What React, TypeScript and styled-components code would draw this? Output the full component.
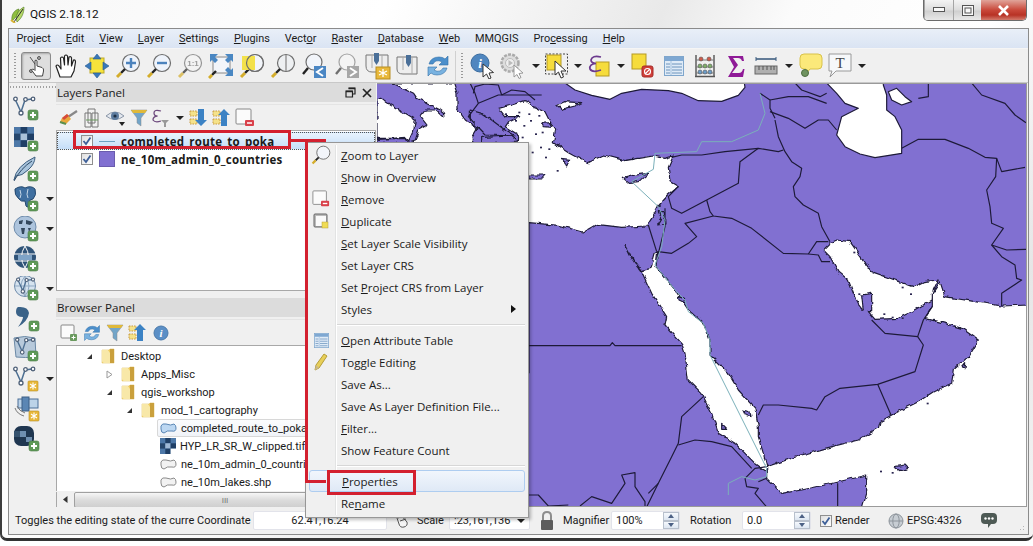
import React from 'react';
import styled, { createGlobalStyle } from 'styled-components';

const UI_FONT = '"Open Sans", "Noto Sans", "Liberation Sans", sans-serif';
const NARROW_FONT = 'Roboto, "Liberation Sans", sans-serif';

const GlobalStyle = createGlobalStyle`
    html, body {
        margin: 0;
        padding: 0;
        background: #fff;
    }
    body {
        font-family: ${UI_FONT};
        font-size: 11.5px;
        color: #1a1a1a;
        width: 1033px;
        height: 546px;
        overflow: hidden;
    }
`;

const Window = styled.div`
    position: relative;
    width: 1033px;
    height: 541px;
    box-sizing: border-box;
    border-left: 2px solid #3c3c3c;
    border-bottom: 3px solid #333;
    border-radius: 0 0 7px 7px;
    background: linear-gradient(115deg, #f7f7f7 0%, #fff 30%, #e9e9e9 52%, #fbfbfb 62%, #fff 78%, #e6e6e6 90%, #f4f4f4 100%);
    display: flex;
    flex-direction: column;
`;

const TitleBar = styled.div`
    height: 28px;
    flex: none;
    display: flex;
    align-items: center;
    padding-left: 8px;
    gap: 4px;
    font-family: ${NARROW_FONT};
    font-size: 11.8px;
    color: #111;
`;

const WinControls = styled.div`
    position: absolute;
    top: 0;
    right: 6px;
    display: flex;
    height: 20px;
    border: 1px solid #6b6b6b;
    border-top: none;
    border-radius: 0 0 5px 5px;
    overflow: hidden;
`;

const WinButton = styled.div<{ $w: number; $close?: boolean }>`
    width: ${p => p.$w}px;
    display: flex;
    align-items: center;
    justify-content: center;
    color: #fff;
    border-left: ${p => p.$close ? 'none' : '1px solid #a5a5a5'};
    background: ${p => p.$close
        ? 'linear-gradient(#e0a49a, #c9483a 50%, #b83225 75%, #d27a6c)'
        : 'linear-gradient(#f4f4f4, #dcdcdc 50%, #cfcfcf 55%, #e8e8e8)'};
`;

const Inner = styled.div`
    flex: 1;
    margin: 0 4px 3px 6px;
    border: 1px solid #8b8b8b;
    background: #f0f0f0;
    display: flex;
    flex-direction: column;
    min-height: 0;
`;

const MenuBar = styled.div`
    height: 19px;
    flex: none;
    display: flex;
    align-items: center;
    font-family: ${NARROW_FONT};
    font-size: 10.9px;
    background: linear-gradient(#e9eff8, #dae4f3);
    border-bottom: 1px solid #f5f5f5;
`;

const MenuItem = styled.div`
    padding: 0 7.5px;
    white-space: nowrap;
`;

const U = styled.span`
    text-decoration: underline;
    text-underline-offset: 1px;
`;

const MainToolbar = styled.div`
    height: 33px;
    flex: none;
    display: flex;
    align-items: center;
    border-bottom: 1px solid #c8c8c8;
    padding-left: 3px;
`;

const Grip = styled.div`
    width: 2px;
    height: 26px;
    margin: 0 5px 0 2px;
    background-image: linear-gradient(#9a9a9a 50%, transparent 50%);
    background-size: 2px 3px;
    flex: none;
`;

const ToolSlot = styled.div<{ $w: number; $active?: boolean }>`
    width: ${p => p.$w}px;
    height: 28px;
    flex: none;
    display: flex;
    align-items: center;
    justify-content: center;
    box-sizing: border-box;
    border-radius: 3px;
    ${p => p.$active && `
        border: 1px solid #8a8a8a;
        background: #dedede;
        box-shadow: inset 1px 1px 2px #aaa;
    `}
`;

const ToolSep = styled.div`
    width: 1px;
    height: 30px;
    background: #d0d0d0;
    margin: 0 3px 0 2px;
    flex: none;
`;

const Caret = styled.div`
    width: 0;
    height: 0;
    border-left: 4px solid transparent;
    border-right: 4px solid transparent;
    border-top: 4px solid #222;
`;

const BodyRow = styled.div`
    height: 424px;
    flex: none;
    display: flex;
`;

const SideToolbar = styled.div`
    width: 47px;
    flex: none;
    display: flex;
    flex-direction: column;
    box-sizing: border-box;
    padding: 11px 0 0 4px;
    background-image: linear-gradient(90deg, #a0a0a0 50%, transparent 50%);
    background-size: 3px 2px;
    background-repeat: repeat-x;
    background-position: 4px 3px;
`;

const SideRow = styled.div`
    height: 30px;
    flex: none;
    display: flex;
    align-items: center;
    gap: 5px;
`;

const SideIconBox = styled.div`
    width: 28px;
    height: 26px;
    flex: none;
`;

const Panels = styled.div`
    width: 320px;
    flex: none;
    display: flex;
    flex-direction: column;
    overflow: hidden;
`;

const PanelTitle = styled.div`
    height: 19px;
    flex: none;
    background: #dcdcdc;
    display: flex;
    align-items: center;
    justify-content: space-between;
    padding: 0 4px 0 1px;
    font-size: 11.6px;
`;

const PanelTitleIcons = styled.div`
    display: flex;
    gap: 6px;
    align-items: center;
`;

const PanelToolbar = styled.div`
    height: 25px;
    flex: none;
    margin-top: 2px;
    display: flex;
    align-items: center;
    gap: 3px;
    padding-left: 3px;
    border-top: 1px solid #e4e4e4;
`;

const PanelIcon = styled.div<{ $w?: number }>`
    width: ${p => p.$w || 20}px;
    height: 20px;
    flex: none;
    display: flex;
    align-items: center;
    justify-content: center;
`;

const LayerList = styled.div`
    height: 161px;
    flex: none;
    box-sizing: border-box;
    background: #fff;
    border: 1px solid #a8a8a8;
    padding-top: 1px;
    font-weight: 700;
    font-size: 11.5px;
    letter-spacing: 0.26px;
`;

const LayerRow = styled.div<{ $selected?: boolean }>`
    height: 18px;
    display: flex;
    align-items: center;
    box-sizing: border-box;
    padding-left: 24px;
    gap: 6px;
    ${p => p.$selected && `
        background: linear-gradient(#e8f3fd, #c5def8);
        border: 1px dotted #555;
        padding-left: 23px;
    `}
`;

const CheckBox = styled.div`
    width: 12px;
    height: 12px;
    flex: none;
    box-sizing: border-box;
    border: 1px solid #8f8f8f;
    background: linear-gradient(135deg, #dfdfdf, #fff);
    display: flex;
    align-items: center;
    justify-content: center;
`;

const Swatch = styled.div`
    width: 16px;
    height: 16px;
    flex: none;
    box-sizing: border-box;
    background: #8170d1;
    border: 1px solid #6a5cae;
`;

const LineSymbol = styled.div`
    width: 16px;
    height: 1px;
    flex: none;
    background: #6aa2c4;
`;

const Splitter = styled.div`
    height: 7px;
    flex: none;
`;

const Tree = styled.div`
    height: 146px;
    flex: none;
    box-sizing: border-box;
    background: #fff;
    border-left: 1px solid #a8a8a8;
    border-top: 1px solid #a8a8a8;
    padding-top: 1px;
    overflow: hidden;
    font-family: ${NARROW_FONT};
    font-size: 11px;
`;

const TreeRow = styled.div<{ $indent: number }>`
    height: 18px;
    display: flex;
    align-items: center;
    padding-left: ${p => p.$indent}px;
    white-space: nowrap;
    box-sizing: border-box;
`;

const Expander = styled.div`
    width: 24px;
    flex: none;
    display: flex;
    justify-content: center;
`;

const TreeLabel = styled.span`
    margin-left: 6px;
    flex: 1;
`;

const LeafLabel = styled.span`
    margin-left: 4px;
    flex: 1;
`;

const LeafBox = styled.div<{ $on?: boolean }>`
    display: flex;
    align-items: center;
    flex: 1;
    height: 18px;
    padding-left: 3px;
    box-sizing: border-box;
    ${p => p.$on && `
        background: linear-gradient(#fbfcfe, #f0f3f8);
        border: 1px solid #d8d8d8;
        border-radius: 2px;
        padding-left: 2px;
    `}
`;

const HScroll = styled.div`
    height: 15px;
    flex: none;
    margin-top: 1px;
    display: flex;
    align-items: center;
    background: #f0f0f0;
    border-left: 1px solid #a8a8a8;
`;

const ScrollArrow = styled.div`
    width: 17px;
    flex: none;
    display: flex;
    justify-content: center;
`;

const ScrollThumb = styled.div`
    flex: 1;
    height: 14px;
    border: 1px solid #a0a0a0;
    border-radius: 2px;
    background: linear-gradient(#f6f6f6, #dcdcdc 50%, #cfcfcf);
    color: #666;
    font-size: 8px;
    text-align: center;
    line-height: 14px;
`;

const MapCanvas = styled.div`
    margin-left: 1px;
    width: 650px;
    height: 424px;
    flex: none;
    background: #fff;
    box-sizing: border-box;
    border-top: 1px solid #9a9a9a;
    border-bottom: 1px solid #9a9a9a;
    border-right: 1px solid #9a9a9a;
    overflow: hidden;
`;

const StatusBar = styled.div`
    flex: 1;
    display: flex;
    align-items: center;
    padding-left: 6px;
    white-space: nowrap;
    position: relative;
    font-family: ${NARROW_FONT};
    font-size: 11px;
`;

const StatusText = styled.div<{ $w: number }>`
    width: ${p => p.$w}px;
    flex: none;
`;

const StatusInput = styled.div<{ $w: number; $center?: boolean }>`
    width: ${p => p.$w}px;
    height: 19px;
    flex: none;
    box-sizing: border-box;
    background: #fff;
    border: 1px solid #e2e3ea;
    border-radius: 2px;
    display: flex;
    align-items: center;
    justify-content: ${p => p.$center ? 'center' : 'flex-start'};
    padding: 0 4px;
    position: relative;
`;

const ComboArrow = styled.div`
    position: absolute;
    right: 0;
    top: 0;
    bottom: 0;
    width: 16px;
    display: flex;
    align-items: center;
    justify-content: center;
`;

const Spin = styled.div`
    position: absolute;
    right: 0;
    top: 0;
    bottom: 0;
    width: 16px;
    display: flex;
    flex-direction: column;
`;

const SpinPart = styled.div<{ $up?: boolean }>`
    flex: 1;
    border: 1px solid #b8c0cc;
    background: linear-gradient(#f6f9fd, #dde6f1);
    display: flex;
    align-items: center;
    justify-content: center;
    &::after {
        content: '';
        border-left: 3px solid transparent;
        border-right: 3px solid transparent;
        ${p => p.$up ? 'border-bottom: 4px solid #4d6185;' : 'border-top: 4px solid #4d6185;'}
    }
`;

const Gap = styled.div<{ $w: number }>`
    width: ${p => p.$w}px;
    flex: none;
    display: flex;
    justify-content: center;
`;

const SizeGrip = styled.div`
    position: absolute;
    right: 2px;
    bottom: 2px;
    width: 10px;
    height: 10px;
    background-image: radial-gradient(#b5b5b5 40%, transparent 45%);
    background-size: 3px 3px;
    clip-path: polygon(100% 0, 100% 100%, 0 100%);
`;

const ContextMenu = styled.div`
    position: absolute;
    left: 303px;
    top: 142px;
    width: 224px;
    height: 376px;
    box-sizing: border-box;
    background: #f0f0f0;
    border: 1px solid #979797;
    box-shadow: 2px 2px 3px rgba(0, 0, 0, 0.25);
    padding-top: 1px;
    &::before {
        content: '';
        position: absolute;
        left: 29px;
        top: 2px;
        bottom: 2px;
        width: 1px;
        background: #e2e3e3;
        box-shadow: 1px 0 0 #fff;
    }
`;

const MenuRow = styled.div<{ $highlight?: boolean }>`
    height: 22px;
    position: relative;
    display: flex;
    align-items: center;
    padding-left: 35px;
    box-sizing: border-box;
    ${p => p.$highlight && `
        margin: 0 3px;
        padding-left: 32px;
        border: 1px solid #aecdf0;
        border-radius: 3px;
        background: linear-gradient(#f1f6fc, #dfe9f6);
    `}
`;

const MenuIcon = styled.div`
    position: absolute;
    left: 5px;
    top: 2px;
    width: 20px;
    height: 18px;
    display: flex;
    align-items: center;
    justify-content: center;
`;

const SubArrow = styled.div`
    position: absolute;
    right: 12px;
    top: 7px;
    border-top: 4px solid transparent;
    border-bottom: 4px solid transparent;
    border-left: 5px solid #111;
`;

const MenuSep = styled.div`
    height: 1px;
    margin: 4px 3px 4px 30px;
    background: #d7d7d7;
    box-shadow: 0 1px 0 #fff;
`;

const RedFrame = styled.div<{ $l: number; $t: number; $w: number; $h: number }>`
    position: absolute;
    left: ${p => p.$l}px;
    top: ${p => p.$t}px;
    width: ${p => p.$w}px;
    height: ${p => p.$h}px;
    box-sizing: border-box;
    border: 3px solid #d3202f;
`;

const RedConnector = styled.div`
    position: absolute;
    left: 287px;
    top: 139px;
    width: 37px;
    height: 344px;
    box-sizing: border-box;
    border-top: 3px solid #d3202f;
    &::before {
        content: '';
        position: absolute;
        left: 16px;
        top: -3px;
        bottom: 0;
        width: 21px;
        box-sizing: border-box;
        border-left: 3px solid #d3202f;
        border-bottom: 3px solid #d3202f;
    }
`;

/* ---------- drawings ---------- */

const Check = () => (
    <svg width="10" height="10" viewBox="0 0 10 10">
        <path d="M1.5 5 L4 8 L8.5 1.5" fill="none" stroke="#3d5f98" strokeWidth="1.8" />
    </svg>
);

const Logo = () => (
    <svg width="16" height="17" viewBox="0 0 16 17">
        <path d="M2 15 C1 9 4 4 9 3 C8 8 6 12 2 15Z" fill="#8fbf3f" stroke="#4f7a20" strokeWidth=".6" />
        <path d="M7 16 C5 10 8 4 14 1 C14 7 12 12 7 16Z" fill="#b7d96a" stroke="#4f7a20" strokeWidth=".6" />
        <path d="M4 16 L13 3" stroke="#2c2c2c" strokeWidth="1" />
        <path d="M1 14 L5 17" stroke="#d8b437" strokeWidth="2" />
    </svg>
);

const Lens: React.FC<{ children?: React.ReactNode; size?: number; dim?: boolean; fill?: string }> = ({ children, size = 26, dim, fill = '#f2f5fa' }) => (
    <svg width={size} height={size} viewBox="0 0 26 26" opacity={dim ? 0.7 : 1}>
        <circle cx="16" cy="10" r="8.5" fill={fill} stroke="#6e6e6e" strokeWidth="1.2" />
        <path d="M10 16 L6 20" stroke="#222" strokeWidth="2.4" />
        <path d="M6 20 L2 24" stroke="#d4ad2b" strokeWidth="3" />
        {children}
    </svg>
);

const PlusBadge: React.FC<{ x?: number; y?: number }> = ({ x = 15, y = 15 }) => (
    <g transform={`translate(${x} ${y})`}>
        <rect width="10" height="10" rx="2" fill="#5f9a58" stroke="#4c7d46" strokeWidth=".6" />
        <path d="M5 2 V8 M2 5 H8" stroke="#fff" strokeWidth="2" />
    </g>
);

const StarBadge: React.FC<{ x?: number; y?: number }> = ({ x = 15, y = 15 }) => (
    <g transform={`translate(${x} ${y})`}>
        <rect width="10" height="10" rx="1" fill="#e8b83a" stroke="#b78d22" strokeWidth=".6" />
        <path d="M5 1.5 V8.5 M2 3 L8 7 M8 3 L2 7" stroke="#fff" strokeWidth="1.1" />
    </g>
);

const Vee: React.FC<{ dx?: number; dy?: number; s?: number }> = ({ dx = 0, dy = 0, s = 1 }) => (
    <g transform={`translate(${dx} ${dy}) scale(${s})`} fill="none" stroke="#4d5f77" strokeWidth="1.3">
        <path d="M2 3 L8 16 L12 4 L19 3" stroke="#4d6f92" strokeWidth="1.5" />
        <circle cx="2.5" cy="3" r="1.8" fill="#fff" />
        <circle cx="8" cy="17" r="2" fill="#fff" />
        <circle cx="12.5" cy="3.5" r="1.8" fill="#fff" />
        <circle cx="20" cy="3" r="1.8" fill="#fff" />
    </g>
);

const S: React.FC<{ w?: number; h?: number; children: React.ReactNode }> = ({ w = 26, h = 26, children }) => (
    <svg width={w} height={h} viewBox={`0 0 ${w} ${h}`}>{children}</svg>
);

const TouchIcon = () => (
    <S w={24} h={24}>
        <path d="M6 3 L18 20" stroke="#555" strokeWidth="1" />
        <circle cx="7" cy="17" r="1.5" fill="#aaa" stroke="#555" />
        <circle cx="15" cy="4" r="1.5" fill="#aaa" stroke="#555" />
        <path d="M11 11 V6.5 Q12.5 5.5 13 7 V12 L18 13.5 Q20 14.5 19.5 17 L18.5 22 H12 L7.5 16 Q8 14.5 10 15.5 L11 16.5Z" fill="#fff" stroke="#444" strokeWidth="1" />
    </S>
);

const HandIcon = () => (
    <S w={24} h={26}>
        <path d="M6 24 L2 13 Q3 11 5 13 L7 16 L6.5 5 Q8 3 9.5 5 L10.5 12 L10.5 3 Q12 1 13.5 3 L14 12 L15 4 Q17 3 17.5 5 L17.5 13 L19.5 7 Q21.5 6.5 21.5 9 L20 18 L17 24 Z" fill="#fff" stroke="#222" strokeWidth="1.2" strokeLinejoin="round" />
    </S>
);

const PanSelIcon = () => (
    <S w={24} h={26}>
        <rect x="5" y="5" width="14" height="15" fill="#f6e33b" stroke="#bda92a" />
        <g fill="#3a78b9" stroke="#255a92" strokeWidth=".6">
            <path d="M12 1 L16 6 H8Z" />
            <path d="M12 25 L16 20 H8Z" />
            <path d="M0 13 L6 9 V17Z" />
            <path d="M24 13 L18 9 V17Z" />
        </g>
    </S>
);

const ZoomInIcon = () => (
    <Lens fill="#eef3fb">
        <path d="M16 5 V15 M11 10 H21" stroke="#4b82bd" strokeWidth="2.4" />
    </Lens>
);

const ZoomOutIcon = () => (
    <Lens fill="#eef3fb">
        <path d="M11 10 H21" stroke="#4b82bd" strokeWidth="2.4" />
    </Lens>
);

const ZoomOneIcon = () => (
    <Lens dim fill="#f5f5f5">
        <text x="16" y="13" fontSize="8" fontWeight="700" textAnchor="middle" fill="#777" fontFamily="Liberation Sans, sans-serif">1:1</text>
    </Lens>
);

const ZoomFullIcon = () => (
    <S w={26} h={26}>
        <rect x="5" y="4" width="17" height="16" fill="#f2f5fa" stroke="#888" />
        <g fill="#4a87c2">
            <path d="M2 1 H10 L7 4 L10 7 L7 10 L4 7 L2 9Z" />
            <path d="M25 1 H17 L20 4 L17 7 L20 10 L23 7 L25 9Z" />
            <path d="M25 23 H17 L20 20 L17 17 L20 14 L23 17 L25 15Z" />
        </g>
        <path d="M8 18 L4 22" stroke="#222" strokeWidth="2.4" />
        <path d="M4 22 L1 25" stroke="#d4ad2b" strokeWidth="3" />
    </S>
);

const ZoomSelIcon = () => (
    <Lens fill="#f2f5fa">
        <rect x="3" y="3" width="13" height="14" fill="#f3e14a" />
        <circle cx="16" cy="10" r="8.5" fill="none" stroke="#6e6e6e" strokeWidth="1.2" />
    </Lens>
);

const ZoomLayerIcon = () => (
    <Lens fill="#eef0f2">
        <path d="M16 2 V18" stroke="#999" strokeWidth="1.5" />
    </Lens>
);

const ZoomLastIcon = () => (
    <S>
        <circle cx="13" cy="9" r="8" fill="#f2f5fa" stroke="#6e6e6e" strokeWidth="1.2" />
        <path d="M7 15 L2 21" stroke="#222" strokeWidth="2.4" />
        <rect x="13" y="13" width="12" height="12" fill="#4b87c4" />
        <path d="M22 15 L16 19 L22 23" fill="none" stroke="#fff" strokeWidth="2" />
    </S>
);

const ZoomNextIcon = () => (
    <S>
        <g opacity=".75">
            <circle cx="13" cy="9" r="8" fill="#f6f6f6" stroke="#8a8a8a" strokeWidth="1.2" />
            <path d="M7 15 L2 21" stroke="#444" strokeWidth="2.4" />
        </g>
        <rect x="13" y="13" width="12" height="12" fill="#a7a7a7" />
        <path d="M16 15 L22 19 L16 23" fill="none" stroke="#fff" strokeWidth="2" />
    </S>
);

const BookmarkNewIcon = () => (
    <S w={28} h={28}>
        <path d="M2 3 H24 V20 H8 Q2 20 2 14Z" fill="#eee" stroke="#777" />
        <path d="M8 3 V16 M18 3 V20" stroke="#aaa" />
        <path d="M10 1 H15 V9 L12.5 13 L10 9Z" fill="#4a6f98" />
        <rect x="12" y="15" width="14" height="12" fill="#e8b83a" stroke="#b78d22" />
        <path d="M19 17 V25 M15 19 L23 23 M23 19 L15 23" stroke="#fff" strokeWidth="1.3" />
    </S>
);

const BookmarksIcon = () => (
    <S w={24} h={24}>
        <path d="M1 3 H21 V20 H7 Q1 20 1 15Z" fill="#eee" stroke="#777" />
        <path d="M7 3 V16 M16 3 V20" stroke="#aaa" />
        <path d="M10 1 H15 V9 L12.5 13 L10 9Z" fill="#4a6f98" />
    </S>
);

const RefreshIcon: React.FC<{ size?: number }> = ({ size = 24 }) => (
    <svg width={size} height={size} viewBox="0 0 24 24">
        <path d="M3 10 Q5 3 13 3 Q17 3 19 5 L22 2 V11 H13 L16 8 Q13 6 10 7 Q8 8 7 10Z" fill="#4c8fcb" stroke="#2f6ea8" strokeWidth=".6" />
        <path d="M21 14 Q19 21 11 21 Q7 21 5 19 L2 22 V13 H11 L8 16 Q11 18 14 17 Q16 16 17 14Z" fill="#79b2e0" stroke="#2f6ea8" strokeWidth=".6" />
    </svg>
);

const IdentifyIcon = () => (
    <S w={26} h={26}>
        <circle cx="10" cy="10" r="9" fill="#4f86bf" stroke="#3a6c9f" />
        <text x="10" y="15" fontSize="13" fontStyle="italic" fontWeight="700" textAnchor="middle" fill="#fff" fontFamily="Liberation Serif, serif">i</text>
        <path d="M13 11 L13 24 L16.5 21 L19 26 L21 25 L19 20 L23.5 19.5Z" fill="#fff" stroke="#333" strokeWidth="1" />
    </S>
);

const ActionIcon = () => (
    <S w={26} h={26}>
        <circle cx="10" cy="10" r="8.5" fill="#ddd" stroke="#aaa" strokeWidth="2.5" strokeDasharray="3 1.2" />
        <circle cx="10" cy="10" r="4.5" fill="#efefef" stroke="#bbb" />
        <path d="M8.5 7 L13 10 L8.5 13Z" fill="#bbb" />
        <path d="M14 12 L14 24 L17 21.5 L19 25.5 L21 24.5 L19 20.5 L23 20Z" fill="#fff" stroke="#999" />
    </S>
);

const SelectIcon = () => (
    <S w={24} h={26}>
        <rect x=".5" y="1" width="22" height="20" fill="none" stroke="#444" strokeDasharray="2 1.5" />
        <rect x="2" y="2" width="14" height="15" fill="#f6dc3c" stroke="#b59a25" />
        <path d="M10 8 L10 22 L13.5 19 L16 25 L18.5 24 L16 18 L21 18Z" fill="#fff" stroke="#333" />
    </S>
);

const ExprIcon = () => (
    <S w={22} h={24}>
        <rect x="8" y="8" width="13" height="14" fill="#f6dc3c" stroke="#b59a25" />
        <path d="M13 3 Q4 1 3 6 Q3 9 8 9.5 Q1 10 2 15 Q4 19 13 16" fill="none" stroke="#6c3a8e" strokeWidth="1.7" />
    </S>
);

const DeselectIcon = () => (
    <S w={24} h={26}>
        <rect x="1" y="1" width="14" height="15" fill="#f6dc3c" stroke="#b59a25" />
        <rect x="11" y="13" width="11" height="11" rx="2" fill="#cf3f3a" stroke="#a52b27" />
        <circle cx="16.5" cy="18.5" r="3" fill="none" stroke="#fff" strokeWidth="1.1" />
        <path d="M14 21 L19 16" stroke="#fff" strokeWidth="1.1" />
    </S>
);

const TableIcon: React.FC<{ size?: number }> = ({ size = 20 }) => (
    <svg width={size} height={size} viewBox="0 0 20 20">
        <rect x=".5" y=".5" width="19" height="19" fill="#dfebf7" stroke="#7fa6cc" />
        <rect x="1" y="1" width="18" height="4" fill="#7fa8d2" />
        <path d="M2 8 H6 M8 8 H18 M2 11 H6 M8 11 H18 M2 14 H6 M8 14 H18 M2 17 H6 M8 17 H18" stroke="#6c94bc" />
        <path d="M7 5 V19" stroke="#a5c2de" />
    </svg>
);

const CalcIcon = () => (
    <S w={22} h={24}>
        <path d="M2 1 V22 M20 1 V22 M1 22.5 H21" stroke="#555" strokeWidth="1.4" />
        <path d="M2 6 H20 M2 13 H20 M2 19 H20" stroke="#777" />
        <g stroke="#555" strokeWidth=".6">
            <circle cx="7" cy="5" r="2" fill="#d05a4a" /><circle cx="15" cy="5" r="2" fill="#d05a4a" />
            <circle cx="6" cy="12" r="2" fill="#7fb069" /><circle cx="11" cy="12" r="2" fill="#7fb069" /><circle cx="16" cy="12" r="2" fill="#7fb069" />
            <circle cx="6" cy="18" r="2" fill="#6a9cc9" /><circle cx="11" cy="18" r="2" fill="#6a9cc9" /><circle cx="16" cy="18" r="2" fill="#6a9cc9" />
        </g>
    </S>
);

const SigmaIcon = () => (
    <S w={18} h={24}>
        <path d="M1 2 H16 L17 7 H15 Q14 4 11 4 H6 L11 11 L5 19 H12 Q15 19 16 15 H17.5 L16 23 H1 L7 13Z" fill="#8f1a97" />
    </S>
);

const MeasureIcon = () => (
    <S w={24} h={22}>
        <path d="M2 4 H22" stroke="#3f5f80" strokeWidth="1.6" />
        <path d="M2 2 V6 M22 2 V6" stroke="#3f5f80" />
        <rect x="1" y="11" width="22" height="8" fill="#b0b0b0" stroke="#666" />
        <path d="M5 11 V15 M9 11 V15 M13 11 V15 M17 11 V15 M20 11 V15" stroke="#555" />
    </S>
);

const TipIcon = () => (
    <S w={24} h={26}>
        <path d="M5 1 H19 Q23 1 23 5 V12 Q23 16 19 16 H11 L7 21 L7 16 H5 Q1 16 1 12 V5 Q1 1 5 1Z" fill="#fbe97a" stroke="#d8c24a" />
        <circle cx="6" cy="20" r="3.5" fill="#6f9360" stroke="#4d6d40" />
    </S>
);

const TextIcon = () => (
    <S w={24} h={26}>
        <path d="M1 1 H23 V18 H8 L2 24 L4 18 H1Z" fill="#f6f8fa" stroke="#9a9a9a" />
        <text x="12" y="15" fontSize="15" textAnchor="middle" fill="#444" fontFamily="Liberation Serif, serif">T</text>
    </S>
);

const BrushIcon = () => (
    <S w={20} h={18}>
        <path d="M18 2 L9 8" stroke="#888" strokeWidth="2.2" />
        <path d="M3 9 L8 5 L12 10 L7 15 Q3 15 1 13Z" fill="#e9a83a" />
        <path d="M3 9 L8 5 L10 7 L5 11Z" fill="#d64a3c" />
        <path d="M1 13 L7 15" stroke="#5a8f4e" strokeWidth="2" />
    </S>
);

const AddGroupIcon = () => (
    <S w={18} h={20}>
        <path d="M5 1 H12 V15 H5Z M2 5 H8 V19 H2Z M9 5 H15 V19 H9Z" fill="#f2f2f2" stroke="#777" />
        <path d="M3 12 H15" stroke="#6b9a5f" strokeWidth="1" />
    </S>
);

const EyeIcon = () => (
    <S w={22} h={20}>
        <path d="M1 8 Q10 0 19 8 Q10 15 1 8Z" fill="#e4e8ee" stroke="#8b97a8" />
        <circle cx="10" cy="8" r="4" fill="#5d7c9f" />
        <circle cx="10" cy="8" r="1.6" fill="#1d2f44" />
        <path d="M14 14 L20 14 L17 18Z" fill="#222" />
    </S>
);

const FilterIcon: React.FC<{ size?: number }> = ({ size = 18 }) => (
    <svg width={size} height={size} viewBox="0 0 18 18">
        <path d="M1 1 H17 L11 9 V17 L7 14 V9Z" fill="#72a5c9" stroke="#8b8b8b" strokeWidth=".5" />
        <path d="M1 1 H17 L15 4 H3Z" fill="#e0b93a" />
    </svg>
);

const ExprFilterIcon = () => (
    <S w={20} h={20}>
        <path d="M10 3 Q3 1 3 5 Q3 8 6.5 8 Q2 8.5 2 12 Q4 15 10 13" fill="none" stroke="#6e4a7e" strokeWidth="1.3" />
        <path d="M10 12 H18 L15 15 V19 H13 V15Z" fill="#999" />
    </S>
);

const ExpandAllIcon: React.FC<{ flip?: boolean }> = ({ flip }) => (
    <S w={20} h={20}>
        <g fill="#f5e28a" stroke="#c89a40" strokeDasharray="1.5 1">
            <rect x="1" y="3" width="7" height="5" />
            <rect x="1" y="11" width="7" height="5" />
        </g>
        <path d={flip ? 'M9 18 V7 H6 L12 1 L18 7 H15 V18Z' : 'M9 1 V12 H6 L12 18 L18 12 H15 V1Z'} fill="#3c82c4" />
    </S>
);

const RemoveLayerIcon: React.FC<{ size?: number }> = ({ size = 20 }) => (
    <svg width={size} height={size} viewBox="0 0 20 20">
        <rect x="1" y="1" width="15" height="15" rx="1" fill="#fbfbfb" stroke="#888" />
        <rect x="10" y="12" width="9" height="6" rx="1" fill="#d9404a" />
        <path d="M12 15 H17" stroke="#fff" strokeWidth="1.5" />
    </svg>
);

const AddRectIcon = () => (
    <S w={18} h={18}>
        <rect x="1" y="1" width="13" height="13" rx="1" fill="#fbfbfb" stroke="#888" />
        <rect x="10" y="10" width="7" height="7" rx="1" fill="#6a9a5f" />
        <path d="M13.5 11.5 V15.5 M11.5 13.5 H15.5" stroke="#fff" />
    </S>
);

const InfoIcon = () => (
    <S w={16} h={16}>
        <circle cx="8" cy="8" r="7" fill="#5b8fc6" stroke="#4b7aab" />
        <text x="8" y="12" fontSize="11" fontStyle="italic" fontWeight="700" textAnchor="middle" fill="#fff" fontFamily="Liberation Serif, serif">i</text>
    </S>
);

const FloatIcon = () => (
    <svg width="11" height="11" viewBox="0 0 11 11">
        <path d="M3.5 1 H10 V7 H8 M1 4 H7.5 V10 H1Z" fill="none" stroke="#222" strokeWidth="1.2" />
        <path d="M3.5 1.5 H10 M1 4.5 H7.5" stroke="#222" strokeWidth="1.6" />
    </svg>
);

const CloseIcon = () => (
    <svg width="10" height="10" viewBox="0 0 10 10">
        <path d="M1 1 L9 9 M9 1 L1 9" stroke="#222" strokeWidth="1.7" />
    </svg>
);

const Folder = () => (
    <S w={14} h={16}>
        <path d="M1 2 H8 L9 1 H13 V15 H8 L1 15Z" fill="#efcb5c" stroke="#d8b74f" strokeWidth=".5" />
        <path d="M1 2 H7 L9 5 V15 H3 Q1 15 1 13Z" fill="#f8e8a8" />
        <path d="M9 1 H13 V15 H9Z" fill="#caa03c" />
    </S>
);

const Blob: React.FC<{ blue?: boolean }> = ({ blue }) => (
    <S w={17} h={13}>
        <path d="M1 4 Q2 1 6 2 Q11 4 14 2 Q16 3 16 6 Q16 10 12 9 Q7 8 4 11 Q1 11 1 7Z" fill={blue ? '#bcd7f2' : '#f2f2f2'} stroke={blue ? '#5a86b5' : '#8b8b8b'} />
    </S>
);

const Checker: React.FC<{ size?: number }> = ({ size = 16 }) => (
    <svg width={size} height={size} viewBox="0 0 16 16">
        <rect width="16" height="16" fill="#4d78a8" />
        <rect x="5.3" width="5.3" height="5.3" fill="#1f3f66" />
        <rect y="5.3" width="5.3" height="5.3" fill="#26466c" />
        <rect x="5.3" y="5.3" width="5.3" height="5.3" fill="#9fb9d6" />
        <rect x="10.6" y="5.3" width="5.4" height="5.3" fill="#1f3f66" />
        <rect x="5.3" y="10.6" width="5.3" height="5.4" fill="#1f3f66" />
        <rect x="10.6" y="10.6" width="5.4" height="5.4" fill="#fff" />
    </svg>
);

const MenuPencil = () => (
    <S w={14} h={18}>
        <path d="M10 1 L13 3 L5 15 L1 17 L2 12Z" fill="#e8cf58" stroke="#b59d38" />
        <path d="M2 12 L5 15 L1 17Z" fill="#c9b98a" />
    </S>
);

const DuplicateIcon = () => (
    <S w={16} h={16}>
        <rect x="1" y="1" width="13" height="13" rx="1" fill="#bbb" stroke="#666" />
        <rect x="3" y="3" width="10" height="10" fill="#fafafa" />
        <rect x="9" y="9" width="6" height="6" fill="#f0dc55" stroke="#b8a23a" strokeWidth=".5" />
    </S>
);

const MouseIcon = () => (
    <S w={14} h={16}>
        <path d="M1 2 L5 1 L12 9 Q13 13 9 14 Q5 15 4 11Z" fill="#f4f4f4" stroke="#555" />
        <path d="M3 5 L8 3 M5 8 L11 6" stroke="#555" />
    </S>
);

const LockIcon = () => (
    <S w={14} h={20}>
        <path d="M3 9 V5 Q3 1 7 1 Q11 1 11 5 V9" fill="none" stroke="#8d8d8d" strokeWidth="2" />
        <rect x="1" y="9" width="12" height="10" rx="1" fill="#5c5c5c" />
    </S>
);

const GlobeSmall = () => (
    <S w={16} h={16}>
        <circle cx="8" cy="8" r="7" fill="#c7cdd3" stroke="#8d949b" />
        <ellipse cx="8" cy="8" rx="3.2" ry="7" fill="none" stroke="#8d949b" />
        <path d="M1 8 H15" stroke="#8d949b" />
    </S>
);

const BubbleIcon = () => (
    <S w={18} h={17}>
        <path d="M5 1 H13 Q17 1 17 5 V8 Q17 12 13 12 H11 L8 16 V12 H5 Q1 12 1 8 V5 Q1 1 5 1Z" fill="#4e5a55" />
        <circle cx="5.5" cy="6.5" r="1.2" fill="#fff" /><circle cx="9" cy="6.5" r="1.2" fill="#fff" /><circle cx="12.5" cy="6.5" r="1.2" fill="#fff" />
    </S>
);

/* side toolbar */
const SideVector = () => (<S w={28} h={26}><Vee /><PlusBadge x={15} y={14} /></S>);
const SideRaster = () => (
    <S w={28} h={26}>
        <g transform="translate(1 1) scale(1.25)"><rect width="16" height="16" fill="#4d78a8" /><rect x="5.3" width="5.3" height="5.3" fill="#1f3f66" /><rect y="5.3" width="5.3" height="5.3" fill="#26466c" /><rect x="5.3" y="5.3" width="5.3" height="5.3" fill="#a9c1da" /><rect x="10.6" y="5.3" width="5.4" height="5.3" fill="#1f3f66" /><rect x="5.3" y="10.6" width="5.3" height="5.4" fill="#1f3f66" /><rect x="10.6" y="10.6" width="5.4" height="5.4" fill="#f0f0f0" /></g>
        <PlusBadge x={15} y={15} />
    </S>
);
const SideFeather = () => (
    <S w={28} h={26}>
        <path d="M1 24 Q3 10 22 1 Q22 8 15 14 Q9 20 3 20Z" fill="#a9c4dc" stroke="#3e5f80" />
        <path d="M1 25 Q8 12 19 5" stroke="#2c4a68" fill="none" />
        <PlusBadge x={15} y={15} />
    </S>
);
const SideElephant = () => (
    <S w={28} h={26}>
        <path d="M2 3 Q8 -1 12 2 Q18 -1 22 3 Q24 9 20 13 L17 14 L16 20 Q14 22 13 20 L12 15 Q8 16 6 13 Q1 9 2 3Z" fill="#3f6fa0" stroke="#24486e" />
        <path d="M7 4 Q9 9 7 12 M15 3 Q13 9 15 12" stroke="#c7d8e8" fill="none" />
        <PlusBadge x={15} y={15} />
    </S>
);
const SideGlobe = () => (
    <S w={28} h={26}>
        <circle cx="12" cy="11" r="11" fill="#adc4dd" stroke="#6f8cab" />
        <path d="M6 5 L10 4 L9 8 L6 8Z M13 4 L20 6 L17 9 L13 8Z M8 12 L12 12 L11 18 L9 18Z M15 12 L18 12 L16 16Z" fill="#33475c" />
        <PlusBadge x={15} y={15} />
    </S>
);
const SideWms = () => (
    <S w={28} h={26}>
        <circle cx="12" cy="11" r="11" fill="#2f5378" />
        <path d="M1 8 H23 M1 15 H23" stroke="#fff" strokeWidth="1.2" />
        <path d="M12 0 Q5 11 12 22 Q19 11 12 0" fill="none" stroke="#fff" />
        <rect x="5" y="9" width="14" height="5" fill="#7ea3c7" />
        <PlusBadge x={15} y={15} />
    </S>
);
const SideVeeGlobe = () => (
    <S w={28} h={26}>
        <circle cx="12" cy="10" r="10.5" fill="#d6e3ef" stroke="#6f8cab" />
        <path d="M2 10 H22 M12 0 V20 M12 0 Q4 10 12 20 Q20 10 12 0" stroke="#8fa9c3" fill="none" />
        <Vee dx={3} dy={1} s={.85} />
        <PlusBadge x={15} y={14} />
    </S>
);
const SideComma = () => (
    <S w={28} h={26}>
        <path d="M5 1 Q15 0 16 7 Q15 15 5 21 Q10 14 10 11 Q3 11 3 6 Q3 2 5 1Z" fill="#3a6288" />
        <PlusBadge x={16} y={15} />
    </S>
);
const SideShape = () => (
    <S w={28} h={26}>
        <path d="M1 2 Q12 -1 22 2 L23 21 Q12 22 3 21Z" fill="#b7c9db" stroke="#6b89a6" />
        <Vee dx={2} dy={1} s={.9} />
        <PlusBadge x={15} y={15} />
    </S>
);
const SideVeeStar = () => (<S w={28} h={26}><Vee /><StarBadge x={15} y={15} /></S>);
const SideOffline = () => (
    <S w={28} h={26}>
        <rect x="5" y="3" width="20" height="9" fill="#bcd3e8" stroke="#4a6f98" />
        <rect x="9" y="1" width="7" height="14" fill="#5b86b4" stroke="#3c5f85" />
        <path d="M2 12 Q4 18 11 20 M4 10 Q6 15 12 17" stroke="#777" fill="none" />
        <StarBadge x={16} y={15} />
    </S>
);
const SideRound = () => (
    <S w={28} h={26}>
        <rect x="1" y="0" width="20" height="20" rx="7" fill="#1f3650" />
        <rect x="7" y="5" width="6" height="6" fill="#6f8fb0" />
        <rect x="13" y="11" width="6" height="5" fill="#6f8fb0" />
        <rect x="1" y="5" width="6" height="6" fill="#36536f" />
        <PlusBadge x={16} y={15} />
    </S>
);

const MAIN_TOOLS: { w: number; el: React.ReactNode; active?: boolean }[] = [
    { w: 30, el: <TouchIcon />, active: true },
    { w: 30, el: <HandIcon /> },
    { w: 31, el: <PanSelIcon /> },
    { w: 31, el: <ZoomInIcon /> },
    { w: 31, el: <ZoomOutIcon /> },
    { w: 31, el: <ZoomOneIcon /> },
    { w: 31, el: <ZoomFullIcon /> },
    { w: 31, el: <ZoomSelIcon /> },
    { w: 31, el: <ZoomLayerIcon /> },
    { w: 32, el: <ZoomLastIcon /> },
    { w: 33, el: <ZoomNextIcon /> },
    { w: 30, el: <BookmarkNewIcon /> },
    { w: 29, el: <BookmarksIcon /> },
    { w: 31, el: <RefreshIcon /> },
];

const ANALYSIS_TOOLS: { w: number; el: React.ReactNode }[] = [
    { w: 30, el: <IdentifyIcon /> },
    { w: 30, el: <ActionIcon /> },
    { w: 15, el: <Caret /> },
    { w: 28, el: <SelectIcon /> },
    { w: 14, el: <Caret /> },
    { w: 28, el: <ExprIcon /> },
    { w: 15, el: <Caret /> },
    { w: 30, el: <DeselectIcon /> },
    { w: 31, el: <TableIcon /> },
    { w: 31, el: <CalcIcon /> },
    { w: 31, el: <SigmaIcon /> },
    { w: 30, el: <MeasureIcon /> },
    { w: 15, el: <Caret /> },
    { w: 29, el: <TipIcon /> },
    { w: 30, el: <TextIcon /> },
    { w: 14, el: <Caret /> },
];

const SIDE_TOOLS: { el: React.ReactNode; caret?: boolean }[] = [
    { el: <SideVector /> },
    { el: <SideRaster /> },
    { el: <SideFeather /> },
    { el: <SideElephant />, caret: true },
    { el: <SideGlobe />, caret: true },
    { el: <SideWms /> },
    { el: <SideVeeGlobe />, caret: true },
    { el: <SideComma /> },
    { el: <SideShape /> },
    { el: <SideVeeStar />, caret: true },
    { el: <SideOffline /> },
    { el: <SideRound /> },
];

const MENUS: React.ReactNode[] = [
    <>Pro<U>j</U>ect</>, <><U>E</U>dit</>, <><U>V</U>iew</>, <><U>L</U>ayer</>, <><U>S</U>ettings</>,
    <><U>P</U>lugins</>, <>Vect<U>o</U>r</>, <><U>R</U>aster</>, <><U>D</U>atabase</>, <><U>W</U>eb</>,
    <>MMQGIS</>, <>Pro<U>c</U>essing</>, <><U>H</U>elp</>,
];

/* map, drawn in 3x coordinates of the canvas */
const WATER = [
    // Adriatic and Ionian
    'M-399,9 L-334,40 -324,55 -254,90 -241,100 -249,108 -269,90 -299,90 -314,110 -294,135 -319,150 -329,180 -349,186 -340,260 -140,260 -150,190 -159,170 -144,145 -179,120 -204,85 -204,40 -214,9Z',
    // Tyrrhenian
    'M-444,55 L-429,55 -404,75 -369,95 -329,120 -334,150 -349,183 -359,172 -399,175 -444,175Z',
    // Aegean and Levant
    'M-79,85 L-40,75 0,62 30,80 60,95 75,125 92,150 85,188 130,218 170,240 190,248 235,225 300,242 340,235 385,228 420,235 445,228 430,262 435,305 460,320 430,345 400,378 382,412 365,438 290,442 215,433 175,456 100,436 12,428 -100,440 -100,190 -20,186 -19,165 -59,140 -49,125 -19,110 -59,110Z',
    // Persian Gulf
    'M895,510 L915,490 935,480 975,485 1000,520 1040,575 1110,600 1165,620 1195,605 1240,600 1225,630 1222,660 1185,680 1150,700 1120,715 1050,718 1030,695 1040,695 1040,640 1010,645 1015,690 1000,670 985,640 970,600 940,575 915,530Z',
    // Red Sea
    'M300,495 L325,540 350,572 378,565 390,520 398,515 393,560 410,580 450,630 490,690 535,730 555,780 555,825 610,880 640,930 690,985 700,1040 700,1070 715,1120 725,1160 725,1175 690,1150 630,1090 580,1060 560,1000 530,940 490,900 480,820 470,790 420,735 425,710 380,640 350,575 320,535Z',
    // Arabian Sea and Gulf of Aden
    'M1510,675 L1430,678 1350,665 1260,650 1245,605 1222,640 1222,680 1200,715 1260,730 1310,745 1360,780 1330,830 1285,870 1280,910 1225,935 1180,965 1100,1005 1065,1025 1060,1045 1000,1080 900,1105 830,1125 725,1160 725,1195 770,1240 830,1230 900,1215 1025,1185 1025,1240 1012,1285 1510,1285Z',
    // Marmara
    'M95,75 L115,65 170,68 150,78 110,88Z',
];

const NORTH_SEAS = [
    // Black Sea
    'M120,-10 L120,9 150,30 200,46 255,58 290,40 350,28 430,32 470,40 520,62 590,64 640,46 660,22 655,-10Z',
    // Caspian
    'M905,-10 L905,9 935,40 960,70 1000,85 950,110 935,165 960,200 1005,222 1050,233 1130,220 1130,150 1110,110 1085,90 1085,45 1075,15 1075,-10Z',
    // Kara-Bogaz
    'M1090,35 L1115,25 1140,50 1160,65 1130,75 1100,60Z',
];

const ISLANDS = [
    'M295,295 L330,285 370,280 340,305 310,307Z',
    'M1108,1160 L1140,1155 1150,1165 1125,1172Z',
    'M-130,172 L-40,168 -20,186 -130,192Z',
    'M-164,120 L-120,165 -30,168 -60,150 -100,120 -130,100 -164,90Z',
    'M12,285 L60,285 50,297 12,297Z',
    'M-444,178 L-400,176 -360,176 -350,190 -444,190Z',
    'M50,130 L75,128 80,142 55,140Z',
    'M110,235 L135,238 125,258Z',
    'M655,990 L675,995 678,1010 662,1005Z',
    'M590,1030 L605,1045 590,1045Z',
    'M460,650 L475,655 480,668 462,660Z',
    'M400,395 L418,395 420,432 398,435 410,415Z',
    'M1312,860 L1322,848 1320,866Z',
];

const SPECKS: [number, number][] = [
    [15, 120], [40, 105], [30, 160], [50, 155], [20, 215], [45, 200], [70, 205], [95, 270], [60, 230],
    [-20, 95], [-30, 120], [-5, 135], [25, 80], [10, 100], [-60, 100], [-10, 170],
    [1065, 1172], [1100, 1176], [1205, 968], [1130, 620], [1155, 640], [1100, 710], [1130, 712], [1075, 700], [1000, 640],
    [985, 515],
];

const BORDERS = [
    'M440,232 L470,225 530,225 600,215 700,205 760,215 775,210',
    'M750,120 L760,170 780,215 800,245 830,265 825,290 805,320 810,350 835,375 880,400 890,440 915,485',
    'M700,205 L645,245 640,310 545,360 470,400 440,385 430,350 460,320',
    'M545,360 L555,395 565,408 620,415 680,445 775,520 850,522 880,525 890,545 915,545',
    'M850,522 L875,485 910,485',
    'M565,408 L480,430 515,470 490,490 440,520 400,515',
    'M420,385 L420,440 395,540',
    'M370,435 L395,515',
    'M12,797 L255,797 262,788 270,797 470,797',
    'M12,430 L12,880',
    'M700,1005 L715,975 760,975 860,985 875,990 900,950 945,925 1058,913 1170,875 1195,795 1178,770 1080,760 1040,720',
    'M1178,770 L1195,720 1222,680',
    'M1058,913 L1085,975 1098,1005',
    'M1415,235 L1412,290 1385,330 1395,380 1400,430 1435,445 1400,495 1430,530 1470,555 1475,595 1490,600 1430,640 1430,678',
    'M1130,205 L1180,178 1260,178 1330,205 1380,232 1415,235 1430,275 1500,262',
    'M1400,495 L1445,510 1503,508',
    'M1210,9 L1210,50 1180,55',
    'M1340,9 L1370,45 1440,70 1470,105 1503,128',
    'M735,60 L790,50 850,50 905,70',
    'M735,95 L790,115 840,145 880,120 910,120 935,150',
    'M750,115 L735,85 735,60 705,40',
    'M810,9 L830,30 885,50 905,40',
    'M535,950 L470,1010 460,1090 440,1130 400,1210 365,1281',
    'M460,1095 L510,1080 560,1085 620,1100 680,1165',
    'M660,1195 L690,1165 725,1160',
    'M660,1195 L665,1220 700,1225 690,1240 725,1281',
    'M700,1205 L725,1195',
    'M12,1245 L40,1245 70,1278 130,1275',
    'M165,1278 L200,1250 260,1270 300,1210 290,1185 330,1178 330,1220 360,1265 360,1281',
    'M370,1240 L400,1210',
    'M938,1210 V1281',
    // Balkans
    'M-205,9 L-165,9 -150,40 -140,70 -170,110 -160,120',
    'M-140,70 L-80,45 50,45',
    'M-155,40 L-150,20 -120,12 -80,15 -70,45',
    'M-70,45 L-40,30 0,35 30,60',
];

const ROUTE = 'M705,40 L720,100 700,150 620,185 530,185 515,215 390,220 385,268 320,305 400,380 420,420 410,500 390,555 455,635 480,660 490,695 535,730 555,780 555,825 725,1165 725,1190 690,1200 650,1190 610,1210 610,1245';

const MapDrawing = () => (
    <svg width="649" height="422" viewBox="-444 12 1947 1266" style={{ display: 'block' }}>
        <defs>
            <filter id="coast" filterUnits="userSpaceOnUse" x="-444" y="-20" width="1960" height="1320">
                <feTurbulence type="fractalNoise" baseFrequency="0.05" numOctaves="2" seed="4" />
                <feDisplacementMap in="SourceGraphic" scale="14" xChannelSelector="R" yChannelSelector="G" />
            </filter>
        </defs>
        <rect x="-444" y="0" width="1960" height="1300" fill="#8170d1" />
        <g filter="url(#coast)">
            {WATER.map((d, i) => <path key={i} d={d} fill="#fff" stroke="#1d1a38" strokeWidth="3.5" strokeLinejoin="round" />)}
            {ISLANDS.map((d, i) => <path key={i} d={d} fill="#8170d1" stroke="#1d1a38" strokeWidth="3.5" strokeLinejoin="round" />)}
        </g>
        {SPECKS.map(([x, y], i) => <rect key={i} x={x} y={y} width="6" height="5" fill="#2a2650" />)}
        {BORDERS.map((d, i) => <path key={i} d={d} fill="none" stroke="#1d1a38" strokeWidth="3.5" strokeLinejoin="round" />)}
        <path d={ROUTE} fill="none" stroke="#7bb0ba" strokeWidth="3" strokeLinejoin="round" />
        {NORTH_SEAS.map((d, i) => <path key={i} d={d} fill="#ffffff" stroke="#1d1a38" strokeWidth="3.5" strokeLinejoin="round" />)}
    </svg>
);

const ExpandOpen = () => (
    <Expander><svg width="7" height="7" viewBox="0 0 7 7"><path d="M6 1 V6 H1Z" fill="#333" /></svg></Expander>
);

const ExpandClosed = () => (
    <Expander><svg width="7" height="9" viewBox="0 0 7 9"><path d="M1 1 L6 4.5 L1 8Z" fill="#fff" stroke="#999" /></svg></Expander>
);

const App: React.FC = () => (
    <>
        <GlobalStyle />
        <Window>
            <TitleBar>
                <Logo />
                <span>QGIS 2.18.12</span>
            </TitleBar>
            <WinControls>
                <WinButton $w={28}>
                    <svg width="12" height="6" viewBox="0 0 12 6"><rect x=".5" y=".5" width="11" height="4" fill="#f8f8f8" stroke="#555" /></svg>
                </WinButton>
                <WinButton $w={27}>
                    <svg width="12" height="11" viewBox="0 0 12 11"><rect x=".5" y=".5" width="11" height="10" fill="#f8f8f8" stroke="#555" /><rect x="3" y="3" width="6" height="5" fill="none" stroke="#555" /></svg>
                </WinButton>
                <WinButton $w={45} $close>
                    <svg width="13" height="11" viewBox="0 0 13 11"><path d="M2 1 L11 10 M11 1 L2 10" stroke="#fff" strokeWidth="2.6" /></svg>
                </WinButton>
            </WinControls>
            <Inner>
                <MenuBar>
                    {MENUS.map((m, i) => <MenuItem key={i}>{m}</MenuItem>)}
                </MenuBar>
                <MainToolbar>
                    <Grip />
                    {MAIN_TOOLS.map((t, i) => <ToolSlot key={i} $w={t.w} $active={t.active}>{t.el}</ToolSlot>)}
                    <ToolSep />
                    <Grip />
                    {ANALYSIS_TOOLS.map((t, i) => <ToolSlot key={i} $w={t.w}>{t.el}</ToolSlot>)}
                </MainToolbar>
                <BodyRow>
                    <SideToolbar>
                        {SIDE_TOOLS.map((t, i) => (
                            <SideRow key={i}>
                                <SideIconBox>{t.el}</SideIconBox>
                                {t.caret && <Caret />}
                            </SideRow>
                        ))}
                    </SideToolbar>
                    <Panels>
                        <PanelTitle>
                            Layers Panel
                            <PanelTitleIcons><FloatIcon /><CloseIcon /></PanelTitleIcons>
                        </PanelTitle>
                        <PanelToolbar>
                            <PanelIcon><BrushIcon /></PanelIcon>
                            <PanelIcon><AddGroupIcon /></PanelIcon>
                            <PanelIcon $w={22}><EyeIcon /></PanelIcon>
                            <PanelIcon $w={18}><FilterIcon /></PanelIcon>
                            <PanelIcon><ExprFilterIcon /></PanelIcon>
                            <PanelIcon $w={12}><Caret /></PanelIcon>
                            <PanelIcon><ExpandAllIcon /></PanelIcon>
                            <PanelIcon><ExpandAllIcon flip /></PanelIcon>
                            <PanelIcon><RemoveLayerIcon /></PanelIcon>
                        </PanelToolbar>
                        <LayerList>
                            <LayerRow $selected>
                                <CheckBox><Check /></CheckBox>
                                <LineSymbol />
                                completed_route_to_poka
                            </LayerRow>
                            <LayerRow>
                                <CheckBox><Check /></CheckBox>
                                <Swatch />
                                ne_10m_admin_0_countries
                            </LayerRow>
                        </LayerList>
                        <Splitter />
                        <PanelTitle>Browser Panel</PanelTitle>
                        <PanelToolbar>
                            <PanelIcon><AddRectIcon /></PanelIcon>
                            <PanelIcon><RefreshIcon size={18} /></PanelIcon>
                            <PanelIcon><FilterIcon /></PanelIcon>
                            <PanelIcon><ExpandAllIcon flip /></PanelIcon>
                            <PanelIcon><InfoIcon /></PanelIcon>
                        </PanelToolbar>
                        <Tree>
                            <TreeRow $indent={20}>
                                <ExpandOpen /><Folder /><TreeLabel>Desktop</TreeLabel>
                            </TreeRow>
                            <TreeRow $indent={40}>
                                <ExpandClosed /><Folder /><TreeLabel>Apps_Misc</TreeLabel>
                            </TreeRow>
                            <TreeRow $indent={40}>
                                <ExpandOpen /><Folder /><TreeLabel>qgis_workshop</TreeLabel>
                            </TreeRow>
                            <TreeRow $indent={60}>
                                <ExpandOpen /><Folder /><TreeLabel>mod_1_cartography</TreeLabel>
                            </TreeRow>
                            <TreeRow $indent={100}>
                                <LeafBox $on><Blob blue /><LeafLabel>completed_route_to_poka.shp</LeafLabel></LeafBox>
                            </TreeRow>
                            <TreeRow $indent={100}>
                                <LeafBox><Checker /><LeafLabel>HYP_LR_SR_W_clipped.tif</LeafLabel></LeafBox>
                            </TreeRow>
                            <TreeRow $indent={100}>
                                <LeafBox><Blob /><LeafLabel>ne_10m_admin_0_countries.shp</LeafLabel></LeafBox>
                            </TreeRow>
                            <TreeRow $indent={100}>
                                <LeafBox><Blob /><LeafLabel>ne_10m_lakes.shp</LeafLabel></LeafBox>
                            </TreeRow>
                        </Tree>
                        <HScroll>
                            <ScrollArrow><svg width="5" height="7" viewBox="0 0 5 7"><path d="M4.5 0 V7 L0 3.5Z" fill="#333" /></svg></ScrollArrow>
                            <ScrollThumb>III</ScrollThumb>
                        </HScroll>
                    </Panels>
                    <MapCanvas><MapDrawing /></MapCanvas>
                </BodyRow>
                <StatusBar>
                    <StatusText $w={182}>Toggles the editing state of the curre</StatusText>
                    <StatusText $w={56}>Coordinate</StatusText>
                    <StatusInput $w={134} $center>62.41,16.24</StatusInput>
                    <Gap $w={30}><MouseIcon /></Gap>
                    <StatusText $w={32}>Scale</StatusText>
                    <StatusInput $w={81}>:23,161,136<ComboArrow><Caret /></ComboArrow></StatusInput>
                    <Gap $w={33}><LockIcon /></Gap>
                    <StatusText $w={48}>Magnifier</StatusText>
                    <StatusInput $w={69}>100%<Spin><SpinPart $up /><SpinPart /></Spin></StatusInput>
                    <Gap $w={10} />
                    <StatusText $w={52}>Rotation</StatusText>
                    <StatusInput $w={69}>0.0<Spin><SpinPart $up /><SpinPart /></Spin></StatusInput>
                    <Gap $w={9} />
                    <CheckBox><Check /></CheckBox>
                    <Gap $w={3} />
                    <StatusText $w={53}>Render</StatusText>
                    <GlobeSmall />
                    <Gap $w={3} />
                    <StatusText $w={73}>EPSG:4326</StatusText>
                    <BubbleIcon />
                    <SizeGrip />
                </StatusBar>
            </Inner>
            <ContextMenu>
                <MenuRow><MenuIcon><Lens size={20} /></MenuIcon><span><U>Z</U>oom to Layer</span></MenuRow>
                <MenuRow><span><U>S</U>how in Overview</span></MenuRow>
                <MenuRow><MenuIcon><RemoveLayerIcon size={18} /></MenuIcon><span><U>R</U>emove</span></MenuRow>
                <MenuRow><MenuIcon><DuplicateIcon /></MenuIcon><span><U>D</U>uplicate</span></MenuRow>
                <MenuRow><span><U>S</U>et Layer Scale Visibility</span></MenuRow>
                <MenuRow>Set Layer CRS</MenuRow>
                <MenuRow><span>Set <U>P</U>roject CRS from Layer</span></MenuRow>
                <MenuRow>Styles<SubArrow /></MenuRow>
                <MenuSep />
                <MenuRow><MenuIcon><TableIcon size={15} /></MenuIcon><span><U>O</U>pen Attribute Table</span></MenuRow>
                <MenuRow><MenuIcon><MenuPencil /></MenuIcon>Toggle Editing</MenuRow>
                <MenuRow>Save As...</MenuRow>
                <MenuRow>Save As Layer Definition File...</MenuRow>
                <MenuRow><span><U>F</U>ilter...</span></MenuRow>
                <MenuRow>Show Feature Count</MenuRow>
                <MenuSep />
                <MenuRow $highlight><span><U>P</U>roperties</span></MenuRow>
                <MenuRow><span>Re<U>n</U>ame</span></MenuRow>
            </ContextMenu>
            <RedFrame $l={71} $t={130} $w={218} $h={19} />
            <RedConnector />
            <RedFrame $l={325} $t={470} $w={89} $h={25} />
        </Window>
    </>
);

export default App;
